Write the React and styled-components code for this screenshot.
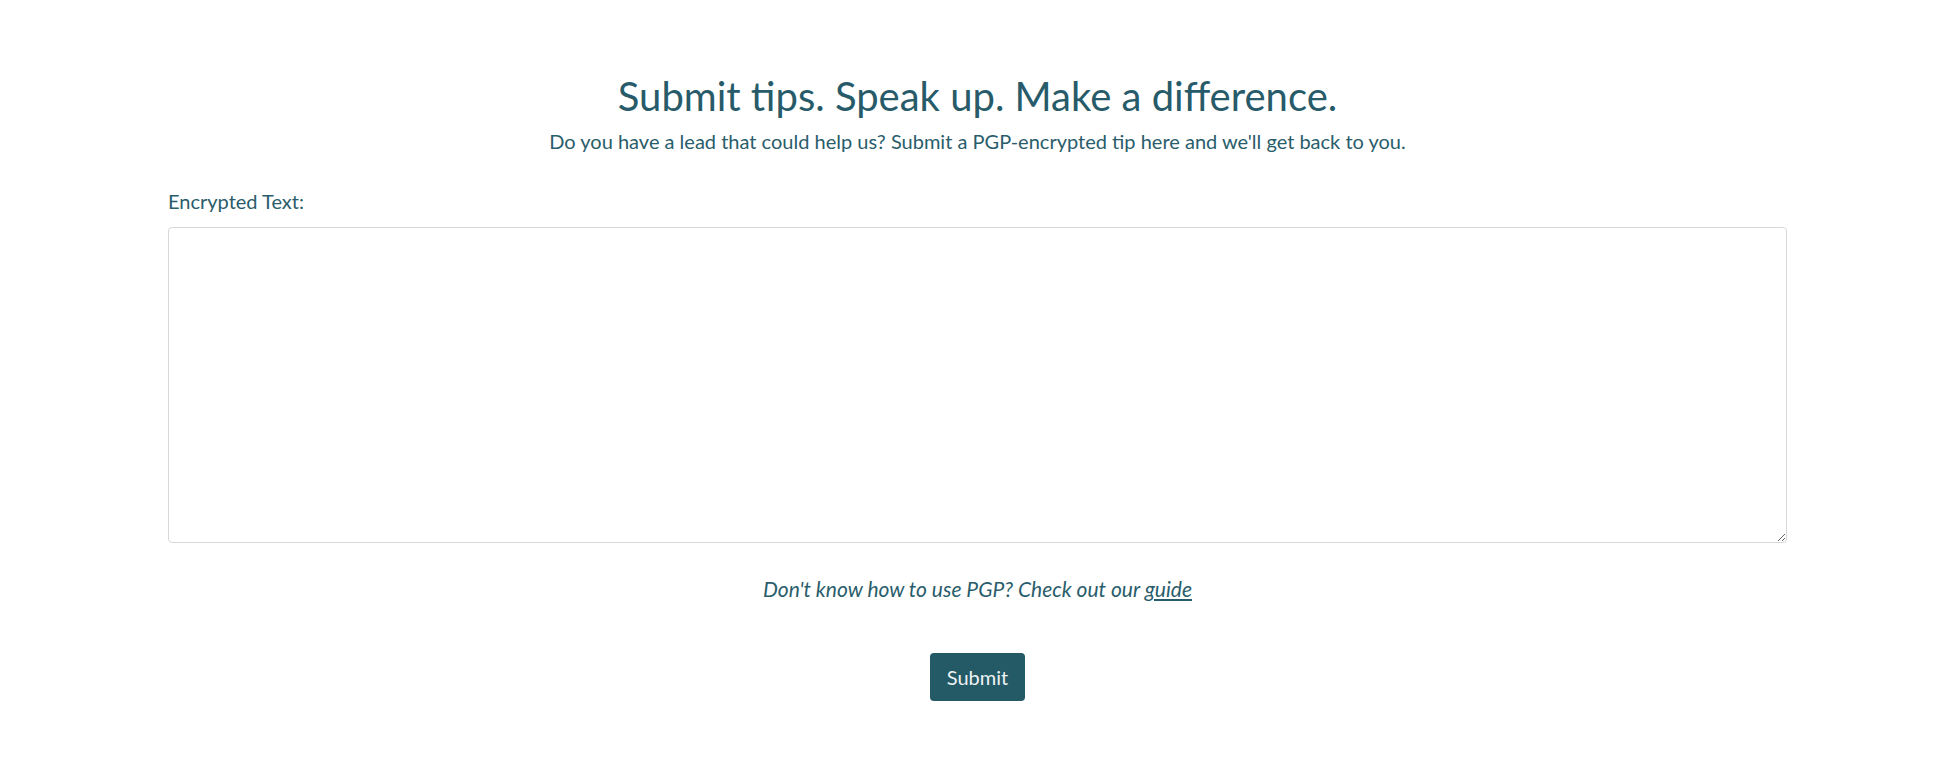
import styled, { createGlobalStyle } from "styled-components"

const GlobalStyle = createGlobalStyle`
    body {
        margin: 0;
        background: #ffffff;
        font-family: Lato, "Open Sans", sans-serif;
        color: #2a5d6b;
    }
`

const App = () => {
    return (
        <>
            <GlobalStyle />
            <Page>
                <Header>
                    <Title>Submit tips. Speak up. Make a difference.</Title>
                    <Lead>Do you have a lead that could help us? Submit a PGP-encrypted tip here and we'll get back to you.</Lead>
                </Header>
                <Form onSubmit={(e) => e.preventDefault()}>
                    <Label htmlFor="tip">Encrypted Text:</Label>
                    <TextArea id="tip" />
                    <Help>Don't know how to use PGP? Check out our <a href="#guide">guide</a></Help>
                    <Button type="submit">Submit</Button>
                </Form>
            </Page>
        </>
    )
}

export default App

const Page = styled.div`
    padding: 72px 157px 60px 168px;
`
const Header = styled.header`
    text-align: center;
`
const Title = styled.h1`
    margin: 0;
    font-size: 40px;
    font-weight: 400;
    line-height: 48px;
    color: #275b69;
`
const Lead = styled.p`
    margin: 7px 0 0;
    font-size: 20px;
    line-height: 28px;
`
const Form = styled.form`
    display: flex;
    flex-direction: column;
    margin-top: 32px;
`
const Label = styled.label`
    font-size: 20px;
    line-height: 28px;
    margin-bottom: 12px;
`
const TextArea = styled.textarea`
    box-sizing: border-box;
    width: 100%;
    height: 316px;
    border: 1px solid #d5d9dc;
    border-radius: 4px;
    padding: 8px 12px;
    font-family: inherit;
    font-size: 16px;
`
const Help = styled.p`
    margin: 32px 0 0;
    text-align: center;
    font-style: italic;
    font-size: 21px;
    line-height: 28px;

    a {
        color: inherit;
    }
`
const Button = styled.button`
    align-self: center;
    margin-top: 50px;
    width: 95px;
    height: 48px;
    border: none;
    border-radius: 4px;
    background-color: #245966;
    color: #eef3f4;
    font-family: inherit;
    font-size: 20px;
    cursor: pointer;
`
